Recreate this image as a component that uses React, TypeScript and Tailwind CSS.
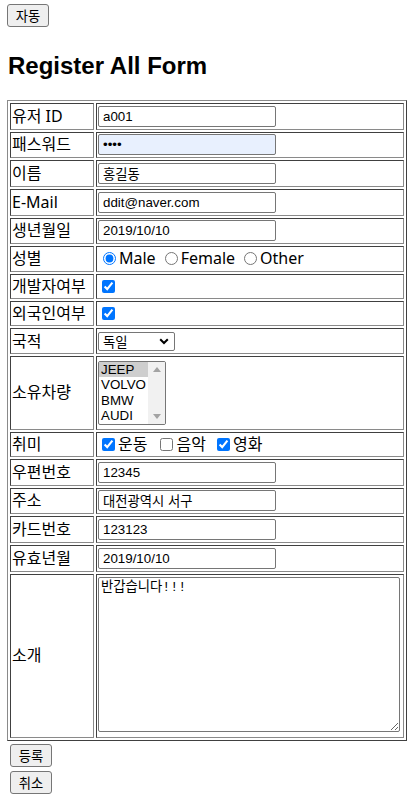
import React from "react";

const cellCls =
  "border border-solid border-t-[#404040] border-l-[#404040] border-r-[#8a8a8a] border-b-[#8a8a8a] p-[1px] align-middle";
const inputCls =
  "block w-[178px] h-[21px] border border-solid border-[#767676] rounded-[2px] pl-[4px] pr-[2px] text-[13.33px] leading-[15px] text-black bg-white font-['Liberation_Sans','Noto_Sans_CJK_KR',sans-serif] outline-none";
const btnCls =
  "w-[42px] h-[23px] border border-solid border-[#767676] rounded-[3px] bg-[#efefef] text-[13.33px] leading-[15px] text-black font-['Noto_Sans_CJK_KR',sans-serif] flex items-center justify-center";

function Row({ label, h, children, top }: { label: string; h: string; children: React.ReactNode; top?: boolean }) {
  return (
    <tr>
      <td className={cellCls + " w-[84px] " + h}>{label}</td>
      <td className={cellCls + (top ? " !align-top" : "") + " " + h}>{children}</td>
    </tr>
  );
}

function TextRow({ label, value, type, bg }: { label: string; value: string; type?: string; bg?: string }) {
  return (
    <Row label={label} h="h-[26.67px]">
      <input
        type={type || "text"}
        defaultValue={value}
        className={inputCls + (bg ? " " + bg : "")}
      />
    </Row>
  );
}

export default function App() {
  return (
    <div className="min-h-[800px] bg-white text-black pl-[7px] pt-[4px] font-['Noto_Sans','Noto_Sans_CJK_KR',sans-serif] text-[16px] leading-[21px]">
      <button className={btnCls}>자동</button>
      <h2 className="mt-[23px] mb-[18px] h-[32px] text-[24px] leading-[32px] font-bold font-['Liberation_Sans',sans-serif] pl-[1px]">
        Register All Form
      </h2>
      <table className="table-fixed w-[400px] border-separate border-spacing-[2px] border border-solid border-t-[#8a8a8a] border-l-[#8a8a8a] border-r-[#404040] border-b-[#404040]">
        <tbody>
          <TextRow label="유저 ID" value="a001" />
          <TextRow label="패스워드" value="asdf" type="password" bg="!bg-[#e8f0fe]" />
          <TextRow label="이름" value="홍길동" />
          <TextRow label="E-Mail" value="ddit@naver.com" />
          <TextRow label="생년월일" value="2019/10/10" />
          <Row label="성별" h="h-[25.33px]">
            <div className="flex items-center">
              <input type="radio" name="g" defaultChecked className="w-[13px] h-[13px] ml-[5px] mr-[3px]" />
              <span>Male</span>
              <span className="w-[4px]" />
              <input type="radio" name="g" className="w-[13px] h-[13px] ml-[5px] mr-[3px]" />
              <span>Female</span>
              <span className="w-[4px]" />
              <input type="radio" name="g" className="w-[13px] h-[13px] ml-[5px] mr-[3px]" />
              <span>Other</span>
            </div>
          </Row>
          <Row label="개발자여부" h="h-[25.33px]">
            <input type="checkbox" defaultChecked className="block w-[13px] h-[13px] m-[3px_3px_3px_4px]" />
          </Row>
          <Row label="외국인여부" h="h-[25.33px]">
            <input type="checkbox" defaultChecked className="block w-[13px] h-[13px] m-[3px_3px_3px_4px]" />
          </Row>
          <Row label="국적" h="h-[26px]">
            <div className="w-[77px] h-[19px] border border-solid border-[#767676] rounded-[2px] flex items-center justify-between pl-[4px] pr-[5px] text-[13.33px] leading-[15px] font-['Noto_Sans_CJK_KR',sans-serif]">
              <span>독일</span>
              <svg width="10" height="7" viewBox="0 0 10 7">
                <path d="M1.2 1.2 L5 5 L8.8 1.2" fill="none" stroke="#000" strokeWidth="2" />
              </svg>
            </div>
          </Row>
          <Row label="소유차량" h="h-[73.33px]">
            <div className="w-[68px] h-[64px] border border-solid border-[#767676] rounded-[2px] flex overflow-hidden text-[13.33px] leading-[15.33px] font-['Liberation_Sans',sans-serif]">
              <div className="flex-1 flex flex-col">
                <div className="bg-[#cecece] pl-[2px]">JEEP</div>
                <div className="pl-[2px]">VOLVO</div>
                <div className="pl-[2px]">BMW</div>
                <div className="pl-[2px]">AUDI</div>
              </div>
              <div className="w-[17px] bg-[#f1f1f1] flex flex-col justify-between items-center py-[5px]">
                <svg width="8" height="5" viewBox="0 0 8 5">
                  <path d="M0 5 L4 0 L8 5 Z" fill="#a3a3a3" />
                </svg>
                <svg width="8" height="5" viewBox="0 0 8 5">
                  <path d="M0 0 L4 5 L8 0 Z" fill="#a3a3a3" />
                </svg>
              </div>
            </div>
          </Row>
          <Row label="취미" h="h-[25.33px]">
            <div className="flex items-center">
              <input type="checkbox" defaultChecked className="w-[13px] h-[13px] m-[3px_3px_3px_4px]" />
              <span>운동</span>
              <span className="w-[9px]" />
              <input type="checkbox" className="w-[13px] h-[13px] m-[3px_3px_3px_4px]" />
              <span>음악</span>
              <span className="w-[7px]" />
              <input type="checkbox" defaultChecked className="w-[13px] h-[13px] m-[3px_3px_3px_4px]" />
              <span>영화</span>
            </div>
          </Row>
          <TextRow label="우편번호" value="12345" />
          <TextRow label="주소" value="대전광역시 서구" />
          <TextRow label="카드번호" value="123123" />
          <TextRow label="유효년월" value="2019/10/10" />
          <Row label="소개" h="h-[164.33px]" top>
            <textarea
              defaultValue="반갑습니다!!!"
              className="block mt-[1px] w-[302px] h-[155px] border border-solid border-[#767676] rounded-[2px] p-[2px] text-[13.33px] leading-[15px] font-['Liberation_Mono','Noto_Sans_CJK_KR',monospace] outline-none"
            />
          </Row>
        </tbody>
      </table>
      <div className="flex flex-col gap-[4px] ml-[3px] mt-[3px]">
        <button className={btnCls}>등록</button>
        <button className={btnCls}>취소</button>
      </div>
    </div>
  );
}
